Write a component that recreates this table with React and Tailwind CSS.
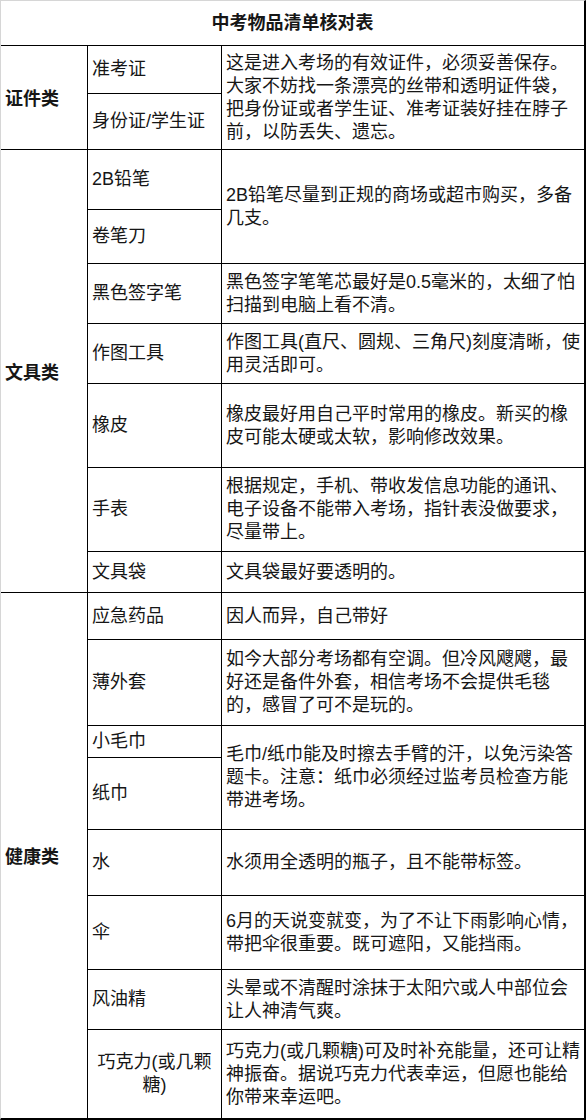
import React from 'react';

const groups = [
  {
    name: '证件类',
    span: 'row-span-2',
    rows: [
      {
        item: '准考证',
        desc: ['这是进入考场的有效证件，必须妥善保存。', '大家不妨找一条漂亮的丝带和透明证件袋，', '把身份证或者学生证、准考证装好挂在脖子', '前，以防丢失、遗忘。'],
        descSpan: 'row-span-2',
      },
      { item: '身份证/学生证' },
    ],
  },
  {
    name: '文具类',
    span: 'row-span-7',
    rows: [
      { item: '2B铅笔', desc: ['2B铅笔尽量到正规的商场或超市购买，多备', '几支。'], descSpan: 'row-span-2' },
      { item: '卷笔刀' },
      { item: '黑色签字笔', desc: ['黑色签字笔笔芯最好是0.5毫米的，太细了怕', '扫描到电脑上看不清。'] },
      { item: '作图工具', desc: ['作图工具(直尺、圆规、三角尺)刻度清晰，使', '用灵活即可。'] },
      { item: '橡皮', desc: ['橡皮最好用自己平时常用的橡皮。新买的橡', '皮可能太硬或太软，影响修改效果。'] },
      { item: '手表', desc: ['根据规定，手机、带收发信息功能的通讯、', '电子设备不能带入考场，指针表没做要求，', '尽量带上。'] },
      { item: '文具袋', desc: ['文具袋最好要透明的。'] },
    ],
  },
  {
    name: '健康类',
    span: 'row-span-8',
    rows: [
      { item: '应急药品', desc: ['因人而异，自己带好'] },
      { item: '薄外套', desc: ['如今大部分考场都有空调。但冷风飕飕，最', '好还是备件外套，相信考场不会提供毛毯', '的，感冒了可不是玩的。'] },
      { item: '小毛巾', desc: ['毛巾/纸巾能及时擦去手臂的汗，以免污染答', '题卡。注意：纸巾必须经过监考员检查方能', '带进考场。'], descSpan: 'row-span-2' },
      { item: '纸巾' },
      { item: '水', desc: ['水须用全透明的瓶子，且不能带标签。'] },
      { item: '伞', desc: ['6月的天说变就变，为了不让下雨影响心情，', '带把伞很重要。既可遮阳，又能挡雨。'] },
      { item: '风油精', desc: ['头晕或不清醒时涂抹于太阳穴或人中部位会', '让人神清气爽。'] },
      { item: ['巧克力(或几颗', '糖)'], center: true, desc: ['巧克力(或几颗糖)可及时补充能量，还可让精', '神振奋。据说巧克力代表幸运，但愿也能给', '你带来幸运吧。'] },
    ],
  },
];

const Lines = ({ lines }) =>
  lines.map((l, i) => (
    <React.Fragment key={i}>
      {i > 0 && <br />}
      {l}
    </React.Fragment>
  ));

export default function App() {
  return (
    <div className="w-[586px] h-[1120px] bg-white text-[#161616] text-[18px] leading-[23px] font-['Liberation_Sans','Noto_Sans_CJK_SC',sans-serif]">
      <div className="grid grid-cols-[86px_133px_362px] grid-rows-[44px_47px_55px_59px_53px_59px_59px_83px_83px_40px_46px_85px_31px_71px_65px_73px_59px_88px] gap-px bg-black border-t border-l border-t-[#d6d6d6] border-l-[#d6d6d6] border-r-2 border-b-2 border-r-black border-b-black">
        <div className="col-span-3 bg-white flex items-center justify-center font-bold">
          中考物品清单核对表
        </div>
        {groups.map((g) => (
          <React.Fragment key={g.name}>
            <div className={`${g.span} bg-white flex items-center pl-1 pt-1 font-bold`}>{g.name}</div>
            {g.rows.map((r, i) => (
              <React.Fragment key={i}>
                <div className={`bg-white flex items-center px-1 ${r.center ? 'justify-center text-center' : ''}`}>
                  {Array.isArray(r.item) ? <span><Lines lines={r.item} /></span> : r.item}
                </div>
                {r.desc && (
                  <div className={`${r.descSpan || ''} bg-white flex items-center pl-1 pr-0 whitespace-nowrap`}>
                    <span><Lines lines={r.desc} /></span>
                  </div>
                )}
              </React.Fragment>
            ))}
          </React.Fragment>
        ))}
      </div>
    </div>
  );
}
